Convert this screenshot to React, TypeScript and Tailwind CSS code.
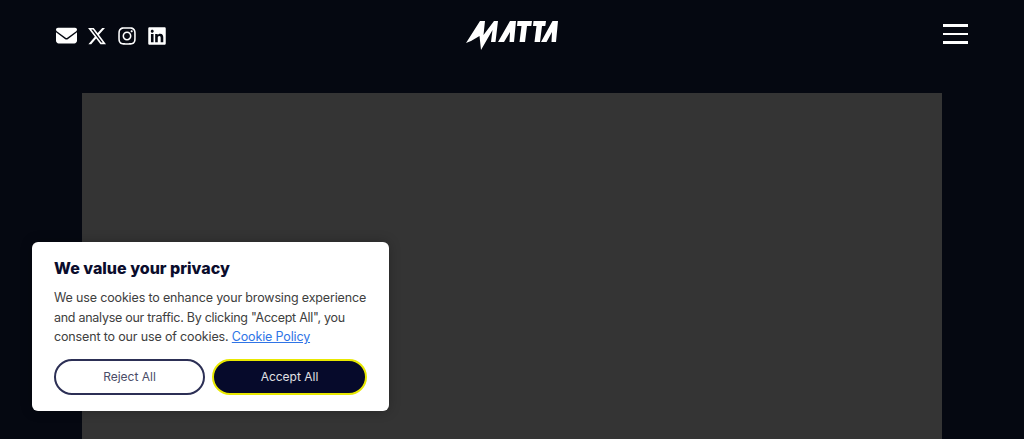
import React from 'react';
import { FaEnvelope, FaInstagram, FaLinkedin, FaXTwitter } from 'react-icons/fa6';

const Logo = () => (
  <svg viewBox="0 0 92 31" className="h-[31px] w-[92px]" fill="white">
    {/* M with lightning tail */}
    <path d="M0 23 L14 1 L19 1 L17.5 15 L28 1 L32 1 L29.5 22 L25 22 L26.5 10 L15 30 L13.5 16 L5 21 Z" />
    {/* A T T A */}
    <path d="M32 22 L44 1 L50 1 L48 22 L43.5 22 L44 12 L38 22 Z" />
    <path d="M51.5 1 L66 1 L65.3 6 L61 6 L59 22 L53.5 22 L55.5 6 L51 6 Z" />
    <path d="M67.5 1 L80 1 L79.3 6 L76 6 L74 22 L68.5 22 L70.5 6 L67 6 Z" />
    <path d="M75 22 L86.5 1 L92 1 L90 22 L85.5 22 L86 12 L80.5 22 Z" />
  </svg>
);

const MenuIcon = () => (
  <div className="flex w-[25px] flex-col gap-[6px]">
    <span className="h-[2.5px] bg-white" />
    <span className="h-[2.5px] bg-white" />
    <span className="h-[2.5px] bg-white" />
  </div>
);

export default function App() {
  return (
    <div className="relative h-[439px] w-[1024px] overflow-hidden bg-[#050811] font-['Inter',sans-serif]">
      {/* Header */}
      <header className="flex h-[93px] items-start justify-between px-[56px] pt-[20px]">
        <div className="flex w-[200px] items-center gap-[10px] pt-[5px] text-white">
          <FaEnvelope className="h-[21px] w-[21px]" />
          <FaXTwitter className="h-[20px] w-[20px]" />
          <FaInstagram className="h-[20px] w-[20px]" />
          <FaLinkedin className="h-[20px] w-[20px]" />
        </div>
        <Logo />
        <div className="flex w-[200px] justify-end pt-[4px]">
          <MenuIcon />
        </div>
      </header>

      {/* Hero placeholder */}
      <div className="mx-[82px] h-[346px] bg-[#343434]" />

      {/* Cookie banner */}
      <div className="absolute left-[32px] top-[242px] h-[169px] w-[357px] rounded-[6px] bg-white px-[22px] pt-[16px] shadow-[0_0_12px_rgba(0,0,0,0.25)]">
        <h2 className="text-[16px] font-extrabold leading-[20px] text-[#0a0c2c]">We value your privacy</h2>
        <p className="mt-[10px] whitespace-nowrap text-[12.5px] leading-[19.5px] tracking-[-0.15px] text-[#404040]">
          We use cookies to enhance your browsing experience
          <br />
          <span className="tracking-[-0.27px]">and analyse our traffic. By clicking "Accept All", you</span>
          <br />
          consent to our use of cookies.{' '}
          <a className="text-[#2f74e6] underline">Cookie Policy</a>
        </p>
        <div className="mt-[12px] flex gap-[7px]">
          <button className="h-[36px] w-[151px] rounded-[18px] border-2 border-[#2c2f55] bg-white text-[12px] text-[#4a4c68]">
            Reject All
          </button>
          <button className="h-[36px] w-[155px] rounded-[18px] border-2 border-[#e8e800] bg-[#060a2b] text-[12px] text-[#e0e0e4]">
            Accept All
          </button>
        </div>
      </div>
    </div>
  );
}
